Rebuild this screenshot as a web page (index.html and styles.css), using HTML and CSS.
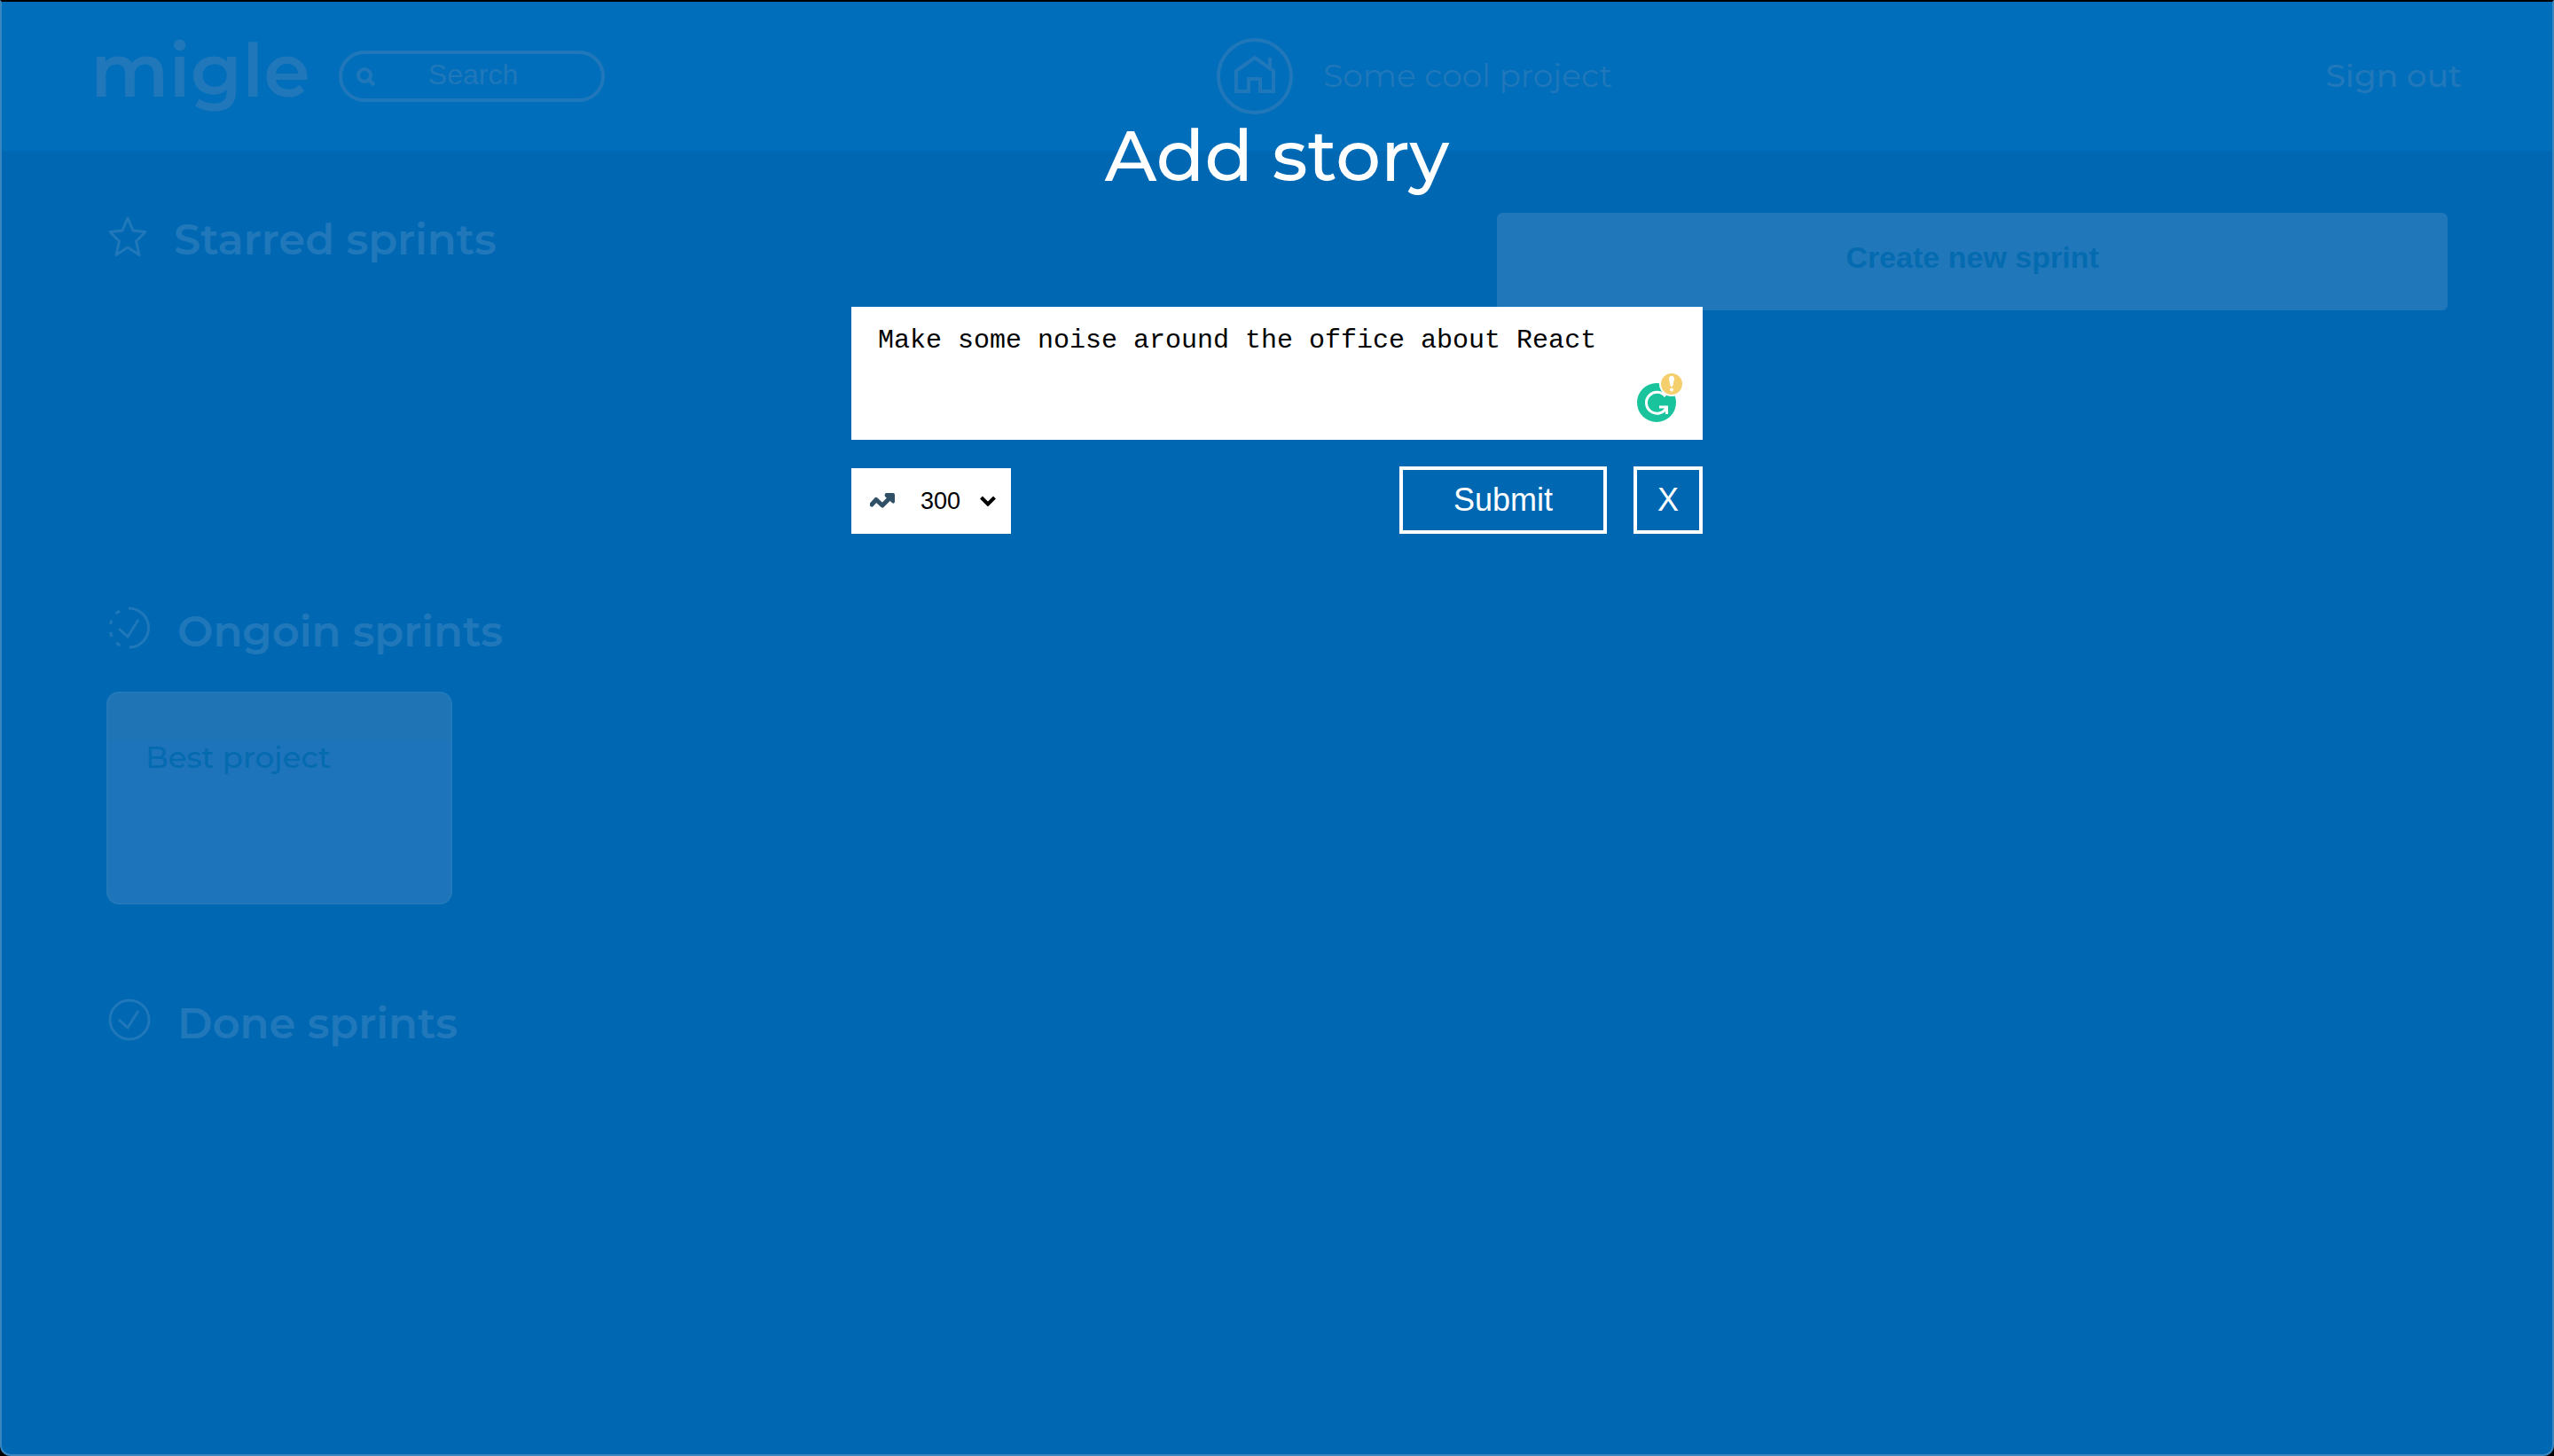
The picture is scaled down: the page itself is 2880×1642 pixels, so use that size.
FILE: index.html
```html
<!DOCTYPE html>
<html lang="en">
<head>
<meta charset="utf-8">
<title>migle</title>
<link rel="stylesheet" href="styles.css">
</head>
<body>
<div class="page">
  <header class="header">
    <div class="brand">
      <a class="logo" href="#">migle</a>
      <form class="search">
        <svg class="search-icon" viewBox="0 0 22 22" aria-hidden="true"><ellipse cx="9" cy="9" rx="7" ry="7"/><path d="M14 14l6 6"/></svg>
        <input class="search-input" type="text" placeholder="Search" aria-label="Search">
      </form>
    </div>
    <nav class="nav">
      <a class="project" href="#">
        <svg class="home-icon" viewBox="0 0 86 86" aria-hidden="true"><circle cx="43" cy="43" r="41"/><path d="M22 37L43 22L64 37V60H49V46H36V60H22ZM60 34V22"/></svg>
        <span class="nav-text">Some cool project</span>
      </a>
      <a class="nav-text sign-out" href="#">Sign out</a>
    </nav>
  </header>
  <main class="content">
    <div class="sprints">
      <section class="group">
        <h2 class="group-title">
          <svg class="group-icon star" viewBox="0 0 44 48" aria-hidden="true"><path d="M22 4L28 18L42 19.500L31.500 30L35 45.500L22 37L9 45.500L12.500 30L2 19.500L16 18Z"/></svg>
          Starred sprints
        </h2>
      </section>
      <section class="group">
        <h2 class="group-title">
          <svg class="group-icon" viewBox="0 0 48 48" aria-hidden="true"><path d="M23 2A22 22 0 0 1 24 46M13 5L8.500 8M4 15.500L2.500 20M2.500 29L4 34M9 41L13.500 44M12 25L22 34L34 15"/></svg>
          Ongoin sprints
        </h2>
        <article class="card"><h3 class="card-title">Best project</h3></article>
      </section>
      <section class="group">
        <h2 class="group-title">
          <svg class="group-icon" viewBox="0 0 48 48" aria-hidden="true"><circle cx="24" cy="24" r="22"/><path d="M12 24L22 33L34 14"/></svg>
          Done sprints
        </h2>
      </section>
    </div>
    <button class="create" type="button">Create new sprint</button>
  </main>
</div>
<div class="modal" role="dialog" aria-labelledby="modal-title">
  <h1 class="modal-title" id="modal-title">Add story</h1>
  <form class="story">
    <div class="story-field">
      <textarea class="story-text" aria-label="Story" spellcheck="false">Make some noise around the office about React</textarea>
      <svg class="checker" viewBox="0 0 56 56" aria-hidden="true">
        <circle cx="24" cy="33" r="22" fill="#19c49c"/>
        <path d="M34 26A12 12 0 1 0 35 39M27 38H35.500V46" fill="none" stroke="#fff" stroke-width="3"/>
        <circle cx="41" cy="12" r="14" fill="#fff"/>
        <circle cx="41" cy="12" r="12" fill="#f4cf6c"/>
        <path d="M38 6Q38 3 41 3T44 6L42.500 14Q41 16 39.500 14Z" fill="#fff"/>
        <circle cx="41" cy="18.500" r="2" fill="#fff"/>
      </svg>
    </div>
    <div class="actions">
      <div class="points">
        <svg class="trend" viewBox="0 0 28 18" aria-hidden="true"><path d="M2 13L7 7.500L14 14L23 5" fill="none" stroke="#2f5066" stroke-width="5" stroke-linejoin="round" stroke-linecap="round"/><path d="M18 0H26Q28 0 28 2V10Q27 13 25 11L17 4Q16 1 18 0Z" fill="#2f5066"/></svg>
        <select class="points-select" aria-label="Points"><option>300</option><option>200</option><option>100</option></select>
        <svg class="chevron" viewBox="0 0 18 12" aria-hidden="true"><path d="M1.500 2L9 9.500L16.500 2"/></svg>
      </div>
      <button class="submit" type="submit">Submit</button>
      <button class="close" type="button">X</button>
    </div>
  </form>
</div>
</body>
</html>
```
FILE: styles.css
```css
* { box-sizing: border-box; margin: 0; }

:root {
  --faded: #2078ba;
  --ink: #0068b3;
  --display: Montserrat, Inter, sans-serif;
  --ui: "Liberation Sans", Arial, sans-serif;
}

body {
  background: #000;
  font-family: var(--display);
  color: var(--faded);
}

a { color: inherit; text-decoration: none; }
svg { flex: none; fill: none; stroke: currentColor; }

.page {
  min-height: 100vh;
  background: var(--ink);
  border: 2px solid #3a86c0;
  border-top-color: #000;
  border-radius: 0 0 12px 12px;
}

.header {
  display: grid;
  grid-template-columns: 19fr 21fr;
  align-items: center;
  height: 168px;
  padding: 0 102px 0 100px;
  background: #006ebb;
}

.brand { display: flex; align-items: center; gap: 32px; }
.logo { padding-bottom: 14px; font-size: 84px; font-weight: 600; line-height: 154px; }

.search { position: relative; width: 300px; }
.search-input {
  display: block;
  width: 100%;
  height: 58px;
  padding: 0 0 4px 4px;
  border: 4px solid var(--faded);
  border-radius: 29px;
  background: none;
  font: 32px var(--ui);
  color: var(--faded);
  text-align: center;
}
.search-input::placeholder { color: var(--faded); opacity: 1; }
.search-icon { position: absolute; left: 20px; top: 19px; width: 22px; stroke-width: 4px; }

.nav { display: flex; align-items: center; justify-content: space-between; font-size: 36px; }
.nav-text { padding-bottom: 2px; }
.project { display: flex; align-items: center; gap: 34px; }
.home-icon { width: 86px; stroke-width: 4px; }
.sign-out { font-weight: 500; }

.content {
  display: flex;
  justify-content: space-between;
  align-items: flex-start;
  padding: 70px 118px 0;
}

.group { min-height: 442px; }
.group-title {
  display: flex;
  align-items: center;
  gap: 30px;
  padding-left: 2px;
  font-size: 48px;
  font-weight: 600;
  line-height: 60px;
}
.group-icon { width: 48px; stroke-width: 3px; margin-bottom: 8px; }
.star { width: 44px; stroke-linejoin: round; }

.card {
  width: 390px;
  height: 240px;
  margin-top: 38px;
  padding: 46px 42px;
  border: 2px solid #2279b9;
  border-radius: 14px;
  background: linear-gradient(#1e74b5 54px, #1e74bb 54px);
}
.card-title { font-size: 34px; font-weight: 500; line-height: 52px; color: #056bb0; }

.create {
  width: 40.6%;
  height: 110px;
  padding: 0 0 10px;
  border: 0;
  border-radius: 6px;
  background: var(--faded);
  font: bold 34px var(--ui);
  color: #056bb0;
}

.modal {
  position: absolute;
  top: 0;
  left: 0;
  right: 0;
  width: 33.3334%;
  margin: 0 auto;
  padding-top: 126px;
  color: #fff;
}
.modal-title {
  margin-bottom: 120px;
  font-size: 80px;
  font-weight: 500;
  line-height: 100px;
  text-align: center;
}

.story-field { position: relative; }
.story-text {
  display: block;
  width: 100%;
  height: 150px;
  padding: 20px 30px;
  border: 0;
  background: #fff;
  font: 30px/36px "Liberation Mono", "Courier New", monospace;
  color: #000;
  resize: none;
}
.checker { position: absolute; right: 20px; bottom: 19px; width: 56px; stroke: none; }

.actions { display: flex; align-items: flex-end; gap: 30px; margin-top: 30px; }
.points { position: relative; width: 180px; margin-right: auto; }
.points-select {
  appearance: none;
  display: block;
  width: 100%;
  height: 74px;
  padding: 0 0 0 78px;
  border: 0;
  border-radius: 0;
  background: #fff;
  font: 27px var(--ui);
  color: #000;
}
.trend { position: absolute; left: 21px; top: 28px; width: 28px; stroke: none; }
.chevron { position: absolute; right: 17px; top: 31px; width: 18px; stroke: #000; stroke-width: 4px; pointer-events: none; }

.submit, .close {
  height: 76px;
  padding: 0;
  border: 4px solid #fff;
  background: none;
  font: 36px var(--ui);
  color: #fff;
}
.submit { width: 234px; }
.close { width: 78px; }
```
